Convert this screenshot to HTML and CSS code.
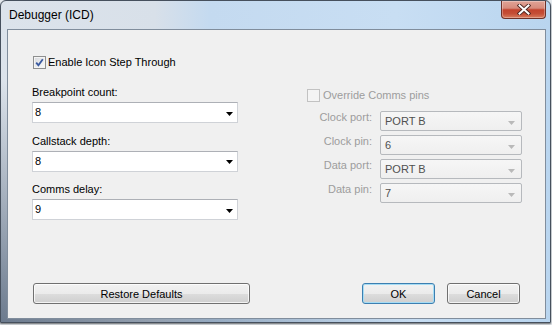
FILE: index.html
```html
<!DOCTYPE html>
<html>
<head>
<meta charset="utf-8">
<title>Debugger (ICD)</title>
<link rel="stylesheet" href="styles.css">
</head>
<body>
<div class="window">
  <div class="titlebar">
    <span class="title">Debugger (ICD)</span>
    <div class="close">
      <svg width="14" height="11" viewBox="0 0 14 11">
        <path d="M2.5 1.5 L11.5 9.5 M11.5 1.5 L2.5 9.5" stroke="#4a2520" stroke-width="3.8" stroke-linecap="square" fill="none"/>
        <path d="M2.5 1.5 L11.5 9.5 M11.5 1.5 L2.5 9.5" stroke="#ffffff" stroke-width="2" stroke-linecap="square" fill="none"/>
      </svg>
    </div>
  </div>
  <div class="client">
    <div class="check-row main-check">
      <span class="cbox">
        <svg width="9" height="9" viewBox="0 0 9 9"><path d="M1.2 4.6 L3.4 7.2 L7.8 1.2" stroke="#3a5aa0" stroke-width="1.8" fill="none"/></svg>
      </span>
      <span>Enable Icon Step Through</span>
    </div>
    <div class="columns">
      <div class="left-col">
        <div class="field">
          <label class="lbl">Breakpoint count:</label>
          <div class="combo"><span>8</span><svg class="arr" width="7" height="4" viewBox="0 0 7 4"><path d="M0 0 H7 L3.5 4 Z" fill="#000"/></svg></div>
        </div>
        <div class="field">
          <label class="lbl">Callstack depth:</label>
          <div class="combo"><span>8</span><svg class="arr" width="7" height="4" viewBox="0 0 7 4"><path d="M0 0 H7 L3.5 4 Z" fill="#000"/></svg></div>
        </div>
        <div class="field">
          <label class="lbl">Comms delay:</label>
          <div class="combo"><span>9</span><svg class="arr" width="7" height="4" viewBox="0 0 7 4"><path d="M0 0 H7 L3.5 4 Z" fill="#000"/></svg></div>
        </div>
      </div>
      <div class="right-col">
        <div class="check-row disabled">
          <span class="cbox cbox-dis"></span>
          <span>Override Comms pins</span>
        </div>
        <div class="pin-grid">
          <span class="plbl">Clock port:</span>
          <div class="dcombo"><span>PORT B</span><svg class="darr" width="7" height="4" viewBox="0 0 7 4"><path d="M0 0 H7 L3.5 4 Z" fill="#b9b9b9"/></svg></div>
          <span class="plbl">Clock pin:</span>
          <div class="dcombo"><span>6</span><svg class="darr" width="7" height="4" viewBox="0 0 7 4"><path d="M0 0 H7 L3.5 4 Z" fill="#b9b9b9"/></svg></div>
          <span class="plbl">Data port:</span>
          <div class="dcombo"><span>PORT B</span><svg class="darr" width="7" height="4" viewBox="0 0 7 4"><path d="M0 0 H7 L3.5 4 Z" fill="#b9b9b9"/></svg></div>
          <span class="plbl">Data pin:</span>
          <div class="dcombo"><span>7</span><svg class="darr" width="7" height="4" viewBox="0 0 7 4"><path d="M0 0 H7 L3.5 4 Z" fill="#b9b9b9"/></svg></div>
        </div>
      </div>
    </div>
    <div class="buttons">
      <button class="btn btn-wide">Restore Defaults</button>
      <button class="btn btn-ok">OK</button>
      <button class="btn btn-cancel">Cancel</button>
    </div>
  </div>
</div>
</body>
</html>
```
FILE: styles.css
```css
html, body {
  margin: 0;
  padding: 0;
}
body {
  width: 552px;
  height: 325px;
  overflow: hidden;
  background: #e6ebf0;
  font-family: "Liberation Sans", Arial, sans-serif;
  font-size: 11px;
  color: #000;
}
.window {
  box-sizing: border-box;
  width: 551px;
  height: 323px;
  border: 1px solid #46505d;
  border-radius: 6px 6px 0 0;
  padding: 0 4px 3px 6px;
  display: flex;
  flex-direction: column;
  background:
    linear-gradient(to top right, rgba(60, 78, 102, 0.7) 0%, rgba(60, 78, 102, 0) 38%),
    linear-gradient(to right, #dce3eb 0%, #d8e0e9 28%, #c4daf0 38%, #c8def3 72%, #b9d5ef 100%);
  box-shadow: 0 1px 2px rgba(0, 0, 0, 0.55);
}
.titlebar {
  height: 28px;
  flex: none;
  display: flex;
  justify-content: space-between;
  align-items: flex-start;
}
.title {
  padding: 6px 0 0 2px;
  font-size: 12px;
  line-height: 16px;
}
.close {
  width: 45px;
  height: 18px;
  box-sizing: border-box;
  border: 1px solid #6e3128;
  border-top: none;
  border-radius: 0 0 4px 4px;
  background: linear-gradient(#e0a396 0%, #d68b7c 42%, #c2432d 52%, #c44e36 74%, #d87c5e 100%);
  box-shadow: inset 0 0 0 1px rgba(255, 255, 255, 0.3);
  display: flex;
  align-items: center;
  justify-content: center;
}
.client {
  box-sizing: border-box;
  height: 290px;
  flex: none;
  border: 1px solid #808d9c;
  background: #f0f0f0;
  padding: 0 0 14px 24px;
  display: flex;
  flex-direction: column;
}
.check-row {
  display: flex;
  align-items: center;
  height: 13px;
  line-height: 13px;
}
.main-check {
  margin: 26px 0 0 1px;
}
.cbox {
  width: 13px;
  height: 13px;
  box-sizing: border-box;
  border: 1px solid #8e8f8f;
  background: linear-gradient(135deg, #d6d8dc 0%, #f1f2f3 70%, #fafafa 100%);
  box-shadow: inset 0 0 0 1px #f4f4f4;
  margin-right: 2px;
  display: flex;
  align-items: center;
  justify-content: center;
}
.disabled {
  color: #9d9d9d;
}
.cbox-dis {
  border-color: #c2c2c2;
  background: #f4f4f4;
  box-shadow: none;
  margin-right: 3px;
}
.columns {
  display: flex;
}
.left-col {
  width: 206px;
  padding-top: 17px;
  display: flex;
  flex-direction: column;
  gap: 11.5px;
}
.field {
  display: flex;
  flex-direction: column;
}
.lbl {
  line-height: 13px;
  margin-bottom: 3px;
}
.combo {
  height: 21px;
  box-sizing: border-box;
  border: 1px solid #cfd2d7;
  border-top-color: #adb0b6;
  background: #fff;
  display: flex;
  align-items: center;
  justify-content: space-between;
  padding: 0 4px 0 2px;
  line-height: 13px;
}
.arr {
  margin-top: 2px;
}
.right-col {
  margin-left: 69px;
  padding-top: 20px;
}
.pin-grid {
  display: grid;
  grid-template-columns: 65px 142px;
  grid-auto-rows: 20px;
  column-gap: 8px;
  row-gap: 4px;
  margin-top: 9px;
}
.plbl {
  text-align: right;
  line-height: 13px;
  color: #9d9d9d;
}
.dcombo {
  box-sizing: border-box;
  border: 1px solid #b6b9bd;
  border-radius: 2px;
  background: linear-gradient(#f6f6f6, #efefef);
  display: flex;
  align-items: center;
  justify-content: space-between;
  padding: 0 6px 0 4px;
  color: #505050;
  line-height: 13px;
}
.darr {
  margin-top: 3px;
}
.buttons {
  margin-top: auto;
  display: flex;
  padding: 0 25px 0 1px;
}
.btn {
  height: 21px;
  box-sizing: border-box;
  border: 1px solid #707070;
  border-radius: 3px;
  background: linear-gradient(#f2f2f2 0%, #ebebeb 50%, #dddddd 51%, #cfcfcf 100%);
  box-shadow: inset 0 0 0 1px rgba(255, 255, 255, 0.75);
  padding: 0;
  font: inherit;
  color: #000;
  display: flex;
  align-items: center;
  justify-content: center;
}
.btn-wide {
  width: 217px;
}
.btn-ok {
  width: 73px;
  margin-left: auto;
  border-color: #3c7fb1;
  box-shadow: inset 0 0 0 1px #a6dcf4;
}
.btn-cancel {
  width: 73px;
  margin-left: 12px;
}
```
